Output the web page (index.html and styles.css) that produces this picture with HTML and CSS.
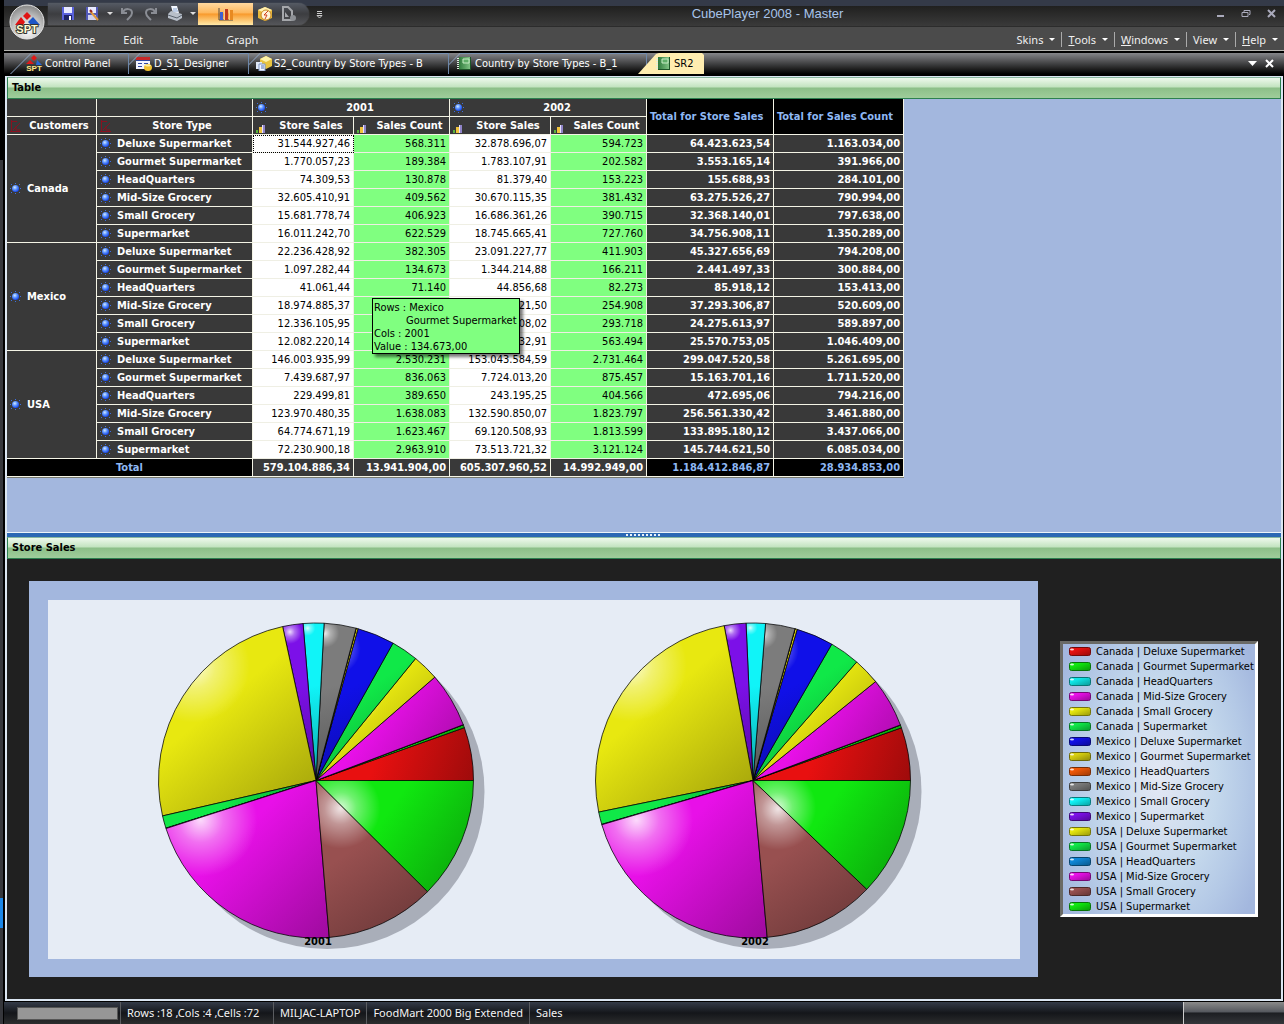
FILE: index.html
```html
<!DOCTYPE html>
<html lang="en">
<head>
<meta charset="utf-8">
<title>CubePlayer 2008 - Master</title>
<link rel="stylesheet" href="styles.css">
</head>
<body>
<svg class="defs" aria-hidden="true">
  <defs>
    <radialGradient id="orb-fill" cx=".5" cy=".75" r=".7"><stop offset="0" stop-color="#fff"/><stop offset=".6" stop-color="#c4c4c4"/><stop offset="1" stop-color="#8d8d8d"/></radialGradient>
    <radialGradient id="ball-fill" cx=".4" cy=".35" r=".65"><stop offset="0" stop-color="#d4eaff"/><stop offset=".5" stop-color="#5a92ff"/><stop offset="1" stop-color="#1a48ec"/></radialGradient>
    <linearGradient id="book-fill" x2="1"><stop offset="0" stop-color="#2f7a3c"/><stop offset="1" stop-color="#86c98a"/></linearGradient>
    <symbol id="member" viewBox="0 0 11 11">
      <path d="M1 1h1v1H1zM9 1h1v1H9zM1 9h1v1H1zM9 9h1v1H9zM5 0h1v1H5zM5 10h1v1H5zM0 5h1v1H0zM10 5h1v1h-1z" fill="#3d6fe0"/>
      <circle cx="5.5" cy="5.5" r="3.5" fill="url(#ball-fill)"/>
    </symbol>
    <symbol id="axis" viewBox="0 0 12 12">
      <path d="M1.500 0v11.500M0 11.500h11M2 1.500h5M3 10l7-7M6 6v4h4" fill="none" stroke="#8a1220"/>
    </symbol>
    <symbol id="bars" viewBox="0 0 9 9">
      <path d="M0 6h2v3H0z" fill="#58b23c"/><path d="M3 3h3v6H3z" fill="#f0c43c"/><path d="M6 1h3v8H6z" fill="#8f84c8"/><path d="M6 1h1v8H6z" fill="#e6e0ff"/>
    </symbol>
    <symbol id="book" viewBox="0 0 14 13">
      <path d="M2 0h12v13H2z" fill="url(#book-fill)"/><path d="M6 2h6v4H6z" fill="#5fae68" stroke="#c6ebc4"/><path d="M1 1v12" stroke="#dfeee0" stroke-width="2" stroke-dasharray="1 1"/><path d="M13.500 0v13M2 12.500h12" stroke="#1d5528"/>
    </symbol>
  </defs>
</svg>

<header class="titlebar">
  <button class="orb" aria-label="Application menu">
    <svg width="36" height="36" viewBox="0 0 36 36"><circle cx="18" cy="18" r="17" fill="url(#orb-fill)" stroke="#e8e8e8"/><path d="M18 8l4 4-4 4-4-4z" fill="#e01414"/><path d="M12 13l4 5-2 3H6z" fill="#e01414"/><path d="M24 13l7 8h-9l-3-3z" fill="#1c55c8"/><text x="18" y="29" class="orb-text">SPT</text></svg>
  </button>
  <div class="quick">
    <button aria-label="Save"><svg width="16" height="16" viewBox="0 0 16 16"><path d="M2 1h12v13H2z" fill="#5a62dc"/><path d="M4 1h8v6H4z" fill="#e8eaff"/><path d="M4 9h8v5H4z" fill="#1e2468"/><path d="M9 10h2v4H9z" fill="#fff"/></svg></button>
    <button aria-label="Save as"><svg width="16" height="16" viewBox="0 0 16 16"><path d="M2 1h12v13H2z" fill="#5259b8"/><path d="M4 1h8v6H4z" fill="#e8eaff"/><path d="M4 9h8v5H4z" fill="#cfd1ee"/><path d="M6 5l8 9" stroke="#e09a3c" stroke-width="2"/><path d="M6 4l2 2" stroke="#902020" stroke-width="2"/></svg></button>
    <button class="drop" aria-label="Save options"></button>
    <button aria-label="Undo"><svg width="16" height="16" viewBox="0 0 16 16"><path d="M3 2v5h5M4 6c2-4 9-4 9 1 0 3-2 4-5 7" fill="none" stroke="#8a8d94" stroke-width="2"/></svg></button>
    <button aria-label="Redo"><svg width="16" height="16" viewBox="0 0 16 16"><path d="M13 2v5H8M12 6c-2-4-9-4-9 1 0 3 2 4 5 7" fill="none" stroke="#8a8d94" stroke-width="2"/></svg></button>
    <button aria-label="Print"><svg width="16" height="16" viewBox="0 0 16 16"><path d="M4 0h6l2 7H6z" fill="#f4f8ff"/><path d="M1 8l3-3 11 3v4l-5 3-9-3z" fill="#b8bfc9"/><path d="M1 9l9 3 5-3" fill="none" stroke="#5b6470"/><path d="M6 3h4M6 5h5" stroke="#87a2cc"/></svg></button>
    <button class="drop" aria-label="Print options"></button>
    <button class="on" aria-label="Chart"><svg width="16" height="16" viewBox="0 0 16 16"><path d="M1 2v12h14" fill="none" stroke="#574a3c"/><path d="M2 6h3v8H2z" fill="#3f5fd0"/><path d="M6 3h4v11H6z" fill="#c03a1c"/><path d="M11 4h4v10h-4z" fill="#e88a20"/><path d="M6 3h1v11H6zM11 4h1v10h-1z" fill="#f8c890"/></svg></button>
    <button aria-label="Cube"><svg width="16" height="16" viewBox="0 0 16 16"><path d="M1 4l7-3 7 3v8l-7 3-7-3z" fill="#e8b83c"/><path d="M1 4l7-3 7 3-7 3z" fill="#fff0b0"/><circle cx="9" cy="9" r="5" fill="#fff4d8" stroke="#c88a20"/><path d="M11 5l-4 4h3l-2 4" fill="none" stroke="#d04020"/></svg></button>
    <button aria-label="Export"><svg width="16" height="16" viewBox="0 0 16 16"><path d="M2 1h5l4 4v9H2z" fill="none" stroke="#a5a7ab" stroke-width="2"/><path d="M4 6l4 5H4z" fill="#a5a7ab"/><circle cx="12" cy="12" r="3" fill="#8d9095"/></svg></button>
  </div>
  <button class="customize" aria-label="Customize toolbar"><svg width="7" height="8" viewBox="0 0 7 8"><path d="M1 .5h5M1 2.500h5" stroke="#ccc"/><path d="M1 4.500h5L3.500 7z" fill="none" stroke="#ccc"/></svg></button>
  <h1>CubePlayer 2008 - Master</h1>
  <div class="winbtns">
    <button aria-label="Minimize"><svg width="9" height="9" viewBox="0 0 9 9"><path d="M1 7h7" stroke="#aab" stroke-width="2"/></svg></button>
    <button aria-label="Restore"><svg width="10" height="9" viewBox="0 0 10 9"><path d="M1 3.500h6v4H1zM3 3V1.500h6v4H8" fill="none" stroke="#aab"/></svg></button>
    <button aria-label="Close"><svg width="9" height="9" viewBox="0 0 9 9"><path d="M1 1l7 7M8 1L1 8" stroke="#aab" stroke-width="2"/></svg></button>
  </div>
</header>

<nav class="menubar">
  <div class="ribbon"><a href="#">Home</a><a href="#">Edit</a><a href="#">Table</a><a href="#">Graph</a></div>
  <div class="menus"><a href="#">Skins</a><a href="#"><u>T</u>ools</a><a href="#"><u>W</u>indows</a><a href="#">View</a><a href="#"><u>H</u>elp</a></div>
</nav>

<div class="tabs">
  <button class="tab t1"><svg width="18" height="18" viewBox="0 0 18 18"><path d="M9 0l3 3-3 3-3-3z" fill="#e01818"/><path d="M5 5l4 4H1z" fill="#e01818"/><path d="M12 5l5 5h-6z" fill="#2468d8"/><text x="9" y="16" class="logo-text">SPT</text></svg>Control Panel</button>
  <button class="tab t2"><svg width="16" height="14" viewBox="0 0 16 14"><path d="M0 0h14v12H0z" fill="#f2f4ff"/><path d="M0 0h14v4H0z" fill="#c82828"/><path d="M0 3h14v1H0zM2 6h4v1H2zM2 9h4v1H2zM8 6h4v1H8z" fill="#3048a0"/><ellipse cx="12" cy="10.500" rx="4" ry="3.500" fill="#f0c030"/><ellipse cx="12" cy="8.500" rx="3" ry="1" fill="#fff0a0"/></svg>D_S1_Designer</button>
  <button class="tab t3"><svg width="16" height="15" viewBox="0 0 16 15"><path d="M4 3l6-3 6 3v7l-6 3-6-3z" fill="#e8c440"/><path d="M4 3l6-3 6 3-6 3z" fill="#fff4a8"/><path d="M0 6h6v7H0z" fill="#dfe8f8"/><path d="M3 8h6v7H3z" fill="#f4f8ff" stroke="#7a94c4"/><path d="M5 10h3M5 12h3" stroke="#5070b0"/></svg>S2_Country by Store Types - B</button>
  <button class="tab t4"><svg width="14" height="13"><use href="#book"/></svg>Country by Store Types - B_1</button>
  <button class="tab active"><svg width="14" height="13"><use href="#book"/></svg>SR2</button>
  <div class="tabctl">
    <button aria-label="List tabs"><svg width="9" height="5" viewBox="0 0 9 5"><path d="M0 0h9L4.500 5z" fill="#fff"/></svg></button>
    <button aria-label="Close tab"><svg width="9" height="9" viewBox="0 0 9 9"><path d="M1 1l7 7M8 1L1 8" stroke="#fff" stroke-width="2"/></svg></button>
  </div>
</div>

<main class="workspace">
  <section>
    <h2 class="panelhead">Table</h2>
    <div class="gridpane">
      <table class="cube">
        <colgroup><col class="c-cust"><col class="c-type"><col class="c-sales"><col class="c-count"><col class="c-sales"><col class="c-count"><col class="c-tsales"><col class="c-tcount"></colgroup>
        <thead>
          <tr><th></th><th></th>
            <th colspan="2"><div class="h shift"><svg width="11" height="11"><use href="#member"/></svg><span>2001</span></div></th>
            <th colspan="2"><div class="h shift"><svg width="11" height="11"><use href="#member"/></svg><span>2002</span></div></th>
            <th rowspan="2" class="tot">Total for Store Sales</th><th rowspan="2" class="tot">Total for Sales Count</th></tr>
          <tr>
            <th><div class="h"><svg width="12" height="12"><use href="#axis"/></svg><span>Customers</span></div></th>
            <th><div class="h"><svg width="12" height="12"><use href="#axis"/></svg><span>Store Type</span></div></th>
            <th><div class="h shift low"><svg width="9" height="9"><use href="#bars"/></svg><span>Store Sales</span></div></th>
            <th><div class="h shift low"><svg width="9" height="9"><use href="#bars"/></svg><span>Sales Count</span></div></th>
            <th><div class="h shift low"><svg width="9" height="9"><use href="#bars"/></svg><span>Store Sales</span></div></th>
            <th><div class="h shift low"><svg width="9" height="9"><use href="#bars"/></svg><span>Sales Count</span></div></th>
          </tr>
        </thead>
        <tbody id="rows"></tbody>
        <tfoot><tr><th colspan="2" class="tot">Total</th><td>579.104.886,34</td><td>13.941.904,00</td><td>605.307.960,52</td><td>14.992.949,00</td><td class="tot">1.184.412.846,87</td><td class="tot">28.934.853,00</td></tr></tfoot>
      </table>
      <div class="tip" role="tooltip">
        <div>Rows : Mexico</div><div class="indent">Gourmet Supermarket</div><div>Cols : 2001</div><div>Value : 134.673,00</div>
      </div>
    </div>
  </section>
  <div class="splitter" role="separator"><span></span></div>
  <section>
    <h2 class="panelhead">Store Sales</h2>
    <div class="chartpane">
      <div class="frame"><svg id="pies" class="pies" viewBox="0 0 972 359"></svg></div>
      <ul class="legend" id="legend"></ul>
    </div>
  </section>
</main>

<footer class="status">
  <div class="cell"><progress aria-label="Progress" value="0" max="100"></progress></div>
  <div class="cell counts">Rows :18 ,Cols :4 ,Cells :72</div>
  <div class="cell">MILJAC-LAPTOP</div>
  <div class="cell">FoodMart 2000 Big Extended</div>
  <div class="cell">Sales</div>
  <div class="corner"></div>
</footer>
<script src="app.js"></script>
</body>
</html>
```
FILE: styles.css
```css
* { box-sizing: border-box; }
body {
  margin: 0; padding: 0 0 0 4px; min-height: 100vh; display: flex; flex-direction: column;
  font: 11px/13px "DejaVu Sans Condensed", "Noto Sans", sans-serif; color: #000;
  background: linear-gradient(#000 160px, #36373c 160px, #36373c 898px, #1a86e8 898px, #1a86e8 928px, #36373c 928px) 0 0 / 3px 100% no-repeat #000;
}
button { font: inherit; color: inherit; background: none; border: 0; padding: 0; margin: 0; display: flex; align-items: center; justify-content: center; }
a { color: inherit; text-decoration: none; }
svg { display: block; flex: none; }
.defs { position: absolute; width: 0; height: 0; }

.titlebar { display: flex; align-items: center; height: 27px; position: relative; border-bottom: 1px solid #2c2c2c;
  background: linear-gradient(#343a48 6px, #20201f 6px, #3a3a3a); }
.orb { position: absolute; left: 5px; top: 4px; z-index: 2; }
.orb-text { font: bold 11px "Liberation Sans", sans-serif; text-anchor: middle; fill: #fffbd0; stroke: #333; stroke-width: 2px; paint-order: stroke; }
.logo-text { font: bold 8px "Liberation Sans", sans-serif; text-anchor: middle; fill: #ffe98a; }
.quick { display: flex; align-items: center; height: 22px; margin: 1px 0 0 44px; padding: 0 8px; border-radius: 0 11px 11px 0;
  background: linear-gradient(#555a64, #3c3d40 50%, #55565a); box-shadow: 0 0 1px #777; }
.quick button { width: 24px; height: 22px; }
.quick .drop { width: 11px; }
.quick .drop::after, .menus a::after { content: ""; border: 3px solid transparent; border-top-color: #ddd; border-bottom: 0; }
.quick .on { width: 55px; background: linear-gradient(#ffd9a0, #fdb75c 45%, #f89a2c 50%, #ffe9a8); }
.customize { margin-left: 7px; padding-top: 3px; }
.titlebar h1 { flex: 1; margin: 0; padding: 2px 4px 0 0; font: 13px/16px "Liberation Sans", Arial, sans-serif; color: #a8c4ea; text-align: center; }
.winbtns { display: flex; gap: 16px; padding-right: 8px; }

.menubar { display: flex; justify-content: space-between; align-items: center; height: 24px; padding: 2px 6px 0 60px;
  background: #4b4b4b; border-bottom: 1px solid #b4b4b0; color: #f0f0f0; font: 11px/15px "Noto Sans", sans-serif; }
.ribbon { display: flex; gap: 28px; }
.menus { display: flex; }
.menus a { display: flex; align-items: center; padding-left: 6px; margin-left: 6px; border-left: 1px solid #aaa; }
.menus a:first-child { border-left-color: transparent; }
.menus a::after { margin-left: 6px; border-top-color: #fff; }

.tabs { display: flex; height: 24px; border-top: 2px solid #000; border-bottom: 1px solid #000; background: linear-gradient(#85868a, #1a1a1a 80%, #000); color: #fff; }
.tab { position: relative; overflow: hidden; justify-content: flex-start; gap: 4px; border-right: 1px solid #6d87a8; white-space: nowrap; }
.tab::before { content: ""; position: absolute; left: -10px; top: 0; width: 100%; height: 21px; transform: skewX(-45deg); transform-origin: bottom left; border-left: 1px solid #8fa8c8; }
.tab::after { content: ""; position: absolute; left: 11px; right: 0; top: 0; border-top: 1px solid #7790b0; }
.t1 { width: 125px; padding-left: 21px; gap: 2px; }
.t1::before { left: 6px; }
.t1::after { left: 27px; }
.t2 { width: 120px; padding-left: 7px; gap: 2px; }
.t3 { width: 200px; padding-left: 7px; gap: 2px; }
.t4 { width: 198px; padding-left: 8px; }
.tab.active { z-index: 1; width: 66px; margin-left: -9px; padding-left: 18px; border: 0; color: #000; background: #ffedb0; clip-path: polygon(0 100%, 18px 1px, 21px 0, 64px 0, 66px 2px, 66px 100%); }
.active::before, .active::after { display: none; }
.tabctl { margin-left: auto; display: flex; align-items: center; gap: 8px; padding-right: 10px; }

.workspace { flex: 1; border: 2px solid #dbe6f2; border-top-width: 1px; margin: 1px 1px 0 1px; background: #202020; }
.panelhead { margin: 0; height: 22px; padding: 0 4px; font-size: 11px; line-height: 20px; border: 1px solid #2c8050; border-top-color: #8ab8a0;
  background: linear-gradient(#eef9ec, #c2e3bf 45%, #8cbf88 50%, #9fcd9b); }
.gridpane { position: relative; padding: 0 0 54px; background: #a3b7de; }

.cube { border-collapse: separate; border-spacing: 0; table-layout: fixed; width: 897px; color: #fff; border-bottom: 1px solid #777a70; }
.c-cust { width: 90px; } .c-type { width: 156px; } .c-sales { width: 101px; } .c-count { width: 96px; } .c-tsales { width: 127px; } .c-tcount { width: 130px; }
.cube th, .cube td { height: 18px; padding: 0 3px; background: #393939; border: 0 solid #f4f4e6; border-width: 0 1px 1px 0; line-height: 17px; text-align: right; font-weight: bold; white-space: nowrap; }
.cube tbody th { text-align: left; }
.cube tbody .n, .cube tbody .g { font-weight: normal; color: #000; background: #fff; border-color: #efefe4; }
.cube tbody .g { background: #80ff80; }
.cube tbody .focus { outline: 1px dotted #000; outline-offset: -1px; }
.cube .tot { background: #000; color: #8fb8f4; }
.cube thead .tot { text-align: left; }
.cube tfoot th { text-align: center; }
.h { display: flex; align-items: center; }
.h span { flex: 1; text-align: center; padding-left: 3px; }
.shift span { padding-left: 7px; }
.low svg { align-self: flex-end; margin-bottom: 1px; }
.m { display: flex; align-items: center; gap: 6px; }

.tip { position: absolute; left: 365px; top: 199px; width: 148px; height: 56px; padding: 2px 1px; border: 1px solid #000; background: #80ff80; box-shadow: 3px 3px 3px #0008; white-space: nowrap; }
.tip .indent { padding-left: 32px; }

.splitter { height: 5px; border-top: 1px solid #eef4fa; background: #2c68b4; display: flex; justify-content: center; align-items: center; }
.splitter span { width: 36px; height: 2px; background: repeating-linear-gradient(90deg, #e8f0fa 0 2px, #2c68b4 2px 4px); }

.chartpane { display: flex; align-items: center; gap: 22px; padding: 22px 23px 22px 22px; background: #202020; }
.frame { flex: 1; padding: 19px 18px 18px 19px; background: #a3b7de; }
.pies { width: 100%; height: auto; background: #e6ecf5; }
.pies text { font-size: 11px; font-weight: bold; text-anchor: middle; }
.legend { width: 198px; margin: 0; padding: 0 0 0 6px; list-style: none; border: 3px solid; border-color: #6a6a66 #fff #fff #6a6a66;
  background: radial-gradient(ellipse 60% 75% at 50% 50%, #e4e8f4, #c4d8ec 50%, #b4c9e6 75%, #a3b7de); }
.legend li { display: flex; align-items: center; gap: 5px; height: 15px; white-space: nowrap; }

.status { display: flex; height: 23px; border-top: 1px solid #000; padding-left: 9px; color: #f4f4f4; font: 11px/22px "Noto Sans", sans-serif;
  background: linear-gradient(#343b48, #14161a 50%, #2c2d2e); }
.cell { display: flex; align-items: center; padding: 0 6px; border-left: 1px solid #5a5c60; }
.cell:first-child { padding: 0 2px 0 4px; border: 0; }
.counts { min-width: 153px; }
progress { appearance: none; width: 101px; height: 13px; border: 1px solid #555; background: #969696; }
progress::-webkit-progress-bar { background: #969696; }
.corner { margin-left: auto; width: 101px; border-left: 1px solid #ccc; background: linear-gradient(#8a8a8a, #55585e 45%, #1c1e22 50%, #34363a); }
```
FILE: app.js
```js
const types = ['Deluxe Supermarket', 'Gourmet Supermarket', 'HeadQuarters', 'Mid-Size Grocery', 'Small Grocery', 'Supermarket'];
const countries = ['Canada', 'Mexico', 'USA'];
const data = `31.544.927,46 568.311 32.878.696,07 594.723 64.423.623,54 1.163.034,00
1.770.057,23 189.384 1.783.107,91 202.582 3.553.165,14 391.966,00
74.309,53 130.878 81.379,40 153.223 155.688,93 284.101,00
32.605.410,91 409.562 30.670.115,35 381.432 63.275.526,27 790.994,00
15.681.778,74 406.923 16.686.361,26 390.715 32.368.140,01 797.638,00
16.011.242,70 622.529 18.745.665,41 727.760 34.756.908,11 1.350.289,00
22.236.428,92 382.305 23.091.227,77 411.903 45.327.656,69 794.208,00
1.097.282,44 134.673 1.344.214,88 166.211 2.441.497,33 300.884,00
41.061,44 71.140 44.856,68 82.273 85.918,12 153.413,00
18.974.885,37 265.701 18.318.421,50 254.908 37.293.306,87 520.609,00
12.336.105,95 296.179 11.939.508,02 293.718 24.275.613,97 589.897,00
12.082.220,14 482.915 13.488.532,91 563.494 25.570.753,05 1.046.409,00
146.003.935,99 2.530.231 153.043.584,59 2.731.464 299.047.520,58 5.261.695,00
7.439.687,97 836.063 7.724.013,20 875.457 15.163.701,16 1.711.520,00
229.499,81 389.650 243.195,25 404.566 472.695,06 794.216,00
123.970.480,35 1.638.083 132.590.850,07 1.823.797 256.561.330,42 3.461.880,00
64.774.671,19 1.623.467 69.120.508,93 1.813.599 133.895.180,12 3.437.066,00
72.230.900,18 2.963.910 73.513.721,32 3.121.124 145.744.621,50 6.085.034,00`.split('\n').map(r => r.split(' '));
const colors = ['#e81010', '#10e810', '#10e8e8', '#e810e8', '#e8e810', '#10e848', '#1010e8', '#d8d010', '#f05808', '#7c7c7c', '#10f4f8', '#7c10e8', '#e8e810', '#10e848', '#1088d8', '#e810e8', '#985050', '#10e810'];
const icon = '<svg width="11" height="11"><use href="#member"/></svg>';

document.getElementById('rows').innerHTML = data.map((r, i) => '<tr>' +
  (i % 6 ? '' : `<th rowspan="6"><div class="m">${icon}${countries[i / 6]}</div></th>`) +
  `<th><div class="m">${icon}${types[i % 6]}</div></th>` +
  r.map((v, k) => `<td class="${k > 3 ? 't' : k % 2 ? 'g' : i + k ? 'n' : 'n focus'}">${v}</td>`).join('') + '</tr>').join('');

const shade = (hex, f) => '#' + [1, 3, 5].map(i => Math.round(parseInt(hex.substr(i, 2), 16) * f).toString(16).padStart(2, '0')).join('');

document.getElementById('legend').innerHTML = data.map((r, i) =>
  `<li><svg width="22" height="9" viewBox="0 0 22 9"><defs><linearGradient id="k${i}" x2="1" y2="1"><stop offset=".3" stop-color="${colors[i]}"/><stop offset="1" stop-color="${shade(colors[i], 0.65)}"/></linearGradient></defs><rect x=".5" y=".5" width="21" height="8" rx="2" fill="url(#k${i})" stroke="${shade(colors[i], 0.5)}"/><ellipse cx="3" cy="2.500" rx="2" ry="1" fill="#fff" opacity=".8"/></svg>${countries[Math.floor(i / 6)]} | ${types[i % 6]}</li>`).join('');

function pie(cx, cy, R, col, label, id) {
  const vals = data.map(r => parseFloat(r[col].replace(/\./g, '').replace(',', '.')));
  const sum = vals.reduce((a, b) => a + b);
  let a = 0, defs = '', out = `<circle cx="${cx + 11}" cy="${cy + 11}" r="${R}" fill="#a9aeb9"/>`;
  vals.forEach((v, i) => {
    const b = a + v / sum * 2 * Math.PI;
    const pt = t => [cx + R * Math.cos(t), cy - R * Math.sin(t)];
    const pts = [[cx, cy], pt(a), pt(b)];
    for (let q = 0; q <= 4; q++) { const t = q * Math.PI / 2; if (t > a && t < b) pts.push(pt(t)); }
    const xs = pts.map(p => p[0]), ys = pts.map(p => p[1]);
    const x = Math.min(...xs), y = Math.min(...ys), w = Math.max(...xs) - x, h = Math.max(...ys) - y, m = Math.min(w, h);
    const d = `M${cx} ${cy}L${pts[1]}A${R} ${R} 0 0 0 ${pts[2]}Z`;
    defs += `<linearGradient id="${id}b${i}" gradientUnits="userSpaceOnUse" x1="${x}" y1="${y}" x2="${x + w}" y2="${y + h}"><stop offset=".4" stop-color="${colors[i]}"/><stop offset="1" stop-color="${shade(colors[i], 0.68)}"/></linearGradient>` +
      `<radialGradient id="${id}h${i}" gradientUnits="userSpaceOnUse" cx="${x + 0.22 * m}" cy="${y + 0.25 * m}" r="${0.36 * m}"><stop offset="0" stop-color="#fff" stop-opacity=".85"/><stop offset=".4" stop-color="#fff" stop-opacity=".4"/><stop offset="1" stop-color="#fff" stop-opacity="0"/></radialGradient>`;
    out += `<path d="${d}" fill="url(#${id}b${i})"/><path d="${d}" fill="url(#${id}h${i})" stroke="#000" stroke-opacity=".75"/>`;
    a = b;
  });
  return `<defs>${defs}</defs>${out}<text x="${cx + 2}" y="345">${label}</text>`;
}
document.getElementById('pies').innerHTML = pie(268, 180.5, 157.5, 0, '2001', 'p') + pie(705, 180.5, 157.5, 2, '2002', 'q');
```
